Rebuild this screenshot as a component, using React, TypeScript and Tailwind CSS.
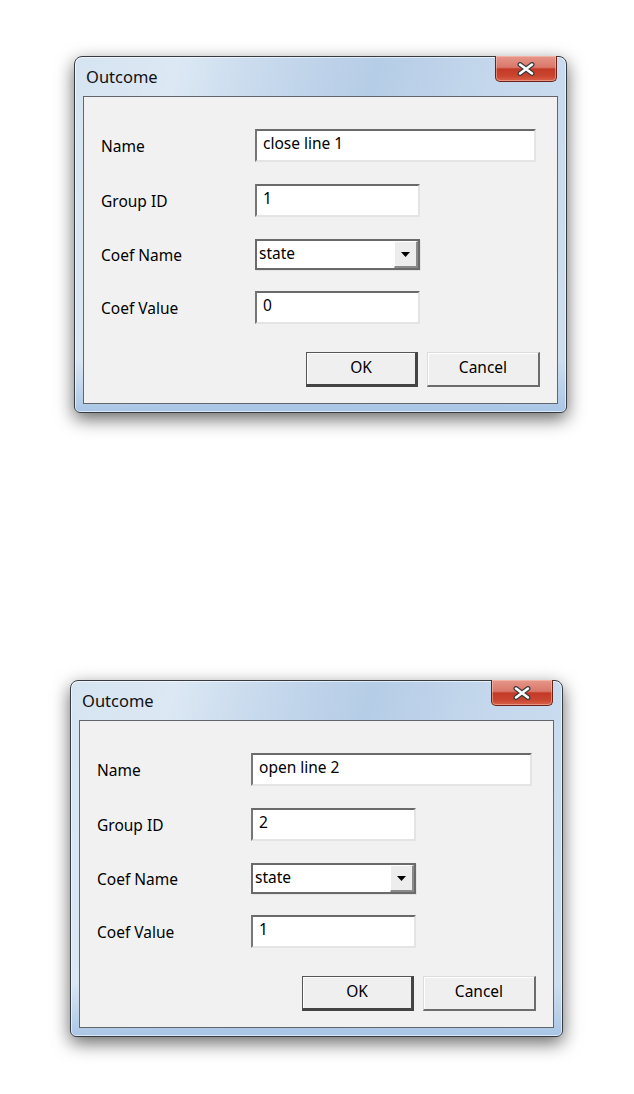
import React from "react";

function CloseButton() {
  return (
    <div className="absolute top-[-1px] right-[9px] w-[62px] h-[26px] rounded-b-[5px] border border-[#6a2118] border-t-0 overflow-hidden bg-[linear-gradient(180deg,#e6978b_0%,#d9786a_45%,#c33a26_52%,#c9452f_80%,#d9624a_100%)] shadow-[inset_0_0_0_1px_rgba(255,210,200,0.45)] flex items-center justify-center">
      <svg width="20" height="14" viewBox="0 0 20 14">
        <path d="M4 2.5 L16 11.5 M16 2.5 L4 11.5" stroke="#3b3b3b" strokeWidth="5" strokeLinecap="round" />
        <path d="M4 2.5 L16 11.5 M16 2.5 L4 11.5" stroke="#ffffff" strokeWidth="2.6" strokeLinecap="round" />
      </svg>
    </div>
  );
}

function TextBox({ value, w, h }: { value: string; w: string; h: string }) {
  return (
    <div
      className={`${w} ${h} bg-white border-t-2 border-l-2 border-r-2 border-b-2 border-t-[#6a6a6a] border-l-[#767676] border-r-[#e4e4e4] border-b-[#e4e4e4] pl-[6px] flex items-center text-[15.5px] text-black leading-none pb-[3px]`}
    >
      {value}
    </div>
  );
}

function Select({ value }: { value: string }) {
  return (
    <div className="w-[165px] h-[31px] bg-white border-2 border-[#6a6a6a] shadow-[1px_1px_0_#e3e3e3] flex items-stretch">
      <div className="flex-1 flex items-center pl-[2px] text-[15.5px] text-black leading-none pb-[1px]">{value}</div>
      <div className="w-[24px] bg-[#ededed] border-t border-l border-t-white border-l-white border-r-2 border-b-2 border-r-[#8a8a8a] border-b-[#8a8a8a] flex items-center justify-center">
        <svg width="9" height="5" viewBox="0 0 9 5">
          <path d="M0 0 H9 L4.5 5 Z" fill="#000" />
        </svg>
      </div>
    </div>
  );
}

function Dialog({ name, group, coef }: { name: string; group: string; coef: string }) {
  return (
    <div className="relative w-[493px] h-[357px] rounded-t-[8px] rounded-b-[6px] border border-[#363b42] bg-[linear-gradient(180deg,#ffffff00_85%,#a9c6e6_100%),linear-gradient(105deg,#d6e4f1_0%,#dce8f4_18%,#cbdcee_30%,#c0d4ea_40%,#b6cde7_52%,#c4d7ec_72%,#cfdff0_100%)] shadow-[0_6px_18px_rgba(0,0,0,0.6),inset_0_0_0_1px_rgba(255,255,255,0.6)]">
      <div className="h-[39px] flex items-center pl-[11px] pt-[1px] text-[16.5px] text-[#111]">Outcome</div>
      <CloseButton />
      <div className="mx-[8px] h-[308px] border border-[#62666b] bg-[#f1f1f1] pt-[32px] pl-[17px] pr-[17px]">
        <div className="flex items-center h-[33px]">
          <div className="w-[154px] text-[15.5px] text-black pt-[2px]">Name</div>
          <TextBox value={name} w="w-[281px]" h="h-[33px]" />
        </div>
        <div className="flex items-center h-[33px] mt-[22px]">
          <div className="w-[154px] text-[15.5px] text-black pt-[2px]">Group ID</div>
          <TextBox value={group} w="w-[165px]" h="h-[33px]" />
        </div>
        <div className="flex items-center h-[31px] mt-[22px]">
          <div className="w-[154px] text-[15.5px] text-black pt-[2px]">Coef Name</div>
          <Select value="state" />
        </div>
        <div className="flex items-center h-[33px] mt-[21px]">
          <div className="w-[154px] text-[15.5px] text-black pt-[2px]">Coef Value</div>
          <TextBox value={coef} w="w-[165px]" h="h-[33px]" />
        </div>
        <div className="flex justify-end gap-[9px] mt-[28px]">
          <div className="w-[112px] h-[35px] bg-[#efefef] border border-t-[#555] border-l-[#555] border-r-[3px] border-b-[3px] border-r-[#444] border-b-[#444] shadow-[inset_1px_1px_0_#ffffff] flex items-center justify-center text-[15.5px] text-black pb-[2px]">
            OK
          </div>
          <div className="w-[113px] h-[35px] bg-[#efefef] border border-t-[#dcdcdc] border-l-[#dcdcdc] border-r-2 border-b-2 border-r-[#6c6c6c] border-b-[#6c6c6c] shadow-[inset_1px_1px_0_#ffffff] flex items-center justify-center text-[15.5px] text-black pb-[2px]">
            Cancel
          </div>
        </div>
      </div>
    </div>
  );
}

export default function App() {
  return (
    <div className="min-h-screen bg-white font-['Noto_Sans',sans-serif]">
      <div className="pl-[74px] pt-[56px]">
        <Dialog name="close line 1" group="1" coef="0" />
      </div>
      <div className="pl-[70px] pt-[267px]">
        <Dialog name="open line 2" group="2" coef="1" />
      </div>
    </div>
  );
}
